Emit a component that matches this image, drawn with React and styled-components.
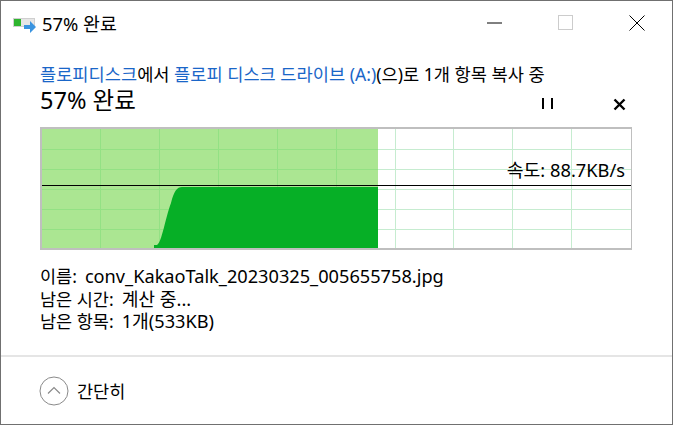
import React from 'react';
import styled, {createGlobalStyle} from 'styled-components';

const GlobalStyle = createGlobalStyle`
	html, body {
		margin: 0;
		padding: 0;
		background: #fff;
	}
	body {
		font-family: "Noto Sans", "Noto Sans CJK KR", sans-serif;
		color: #000;
	}
`;

const Window = styled.div`
	box-sizing: border-box;
	width: 673px;
	height: 425px;
	border: 1px solid #707070;
	background: #fff;
	display: flex;
	flex-direction: column;
`;

const TitleBar = styled.div`
	display: flex;
	align-items: center;
	height: 44px;
	padding-left: 12px;
	font-size: 18.4px;
	flex: none;
`;

const TitleText = styled.span`
	margin-left: 5px;
	flex: 1;
`;

const WinButton = styled.div`
	width: 71px;
	height: 44px;
	display: flex;
	align-items: center;
	justify-content: center;
`;

const Body = styled.div`
	flex: 1;
	padding: 17px 17px 0 39px;
`;

const CopyLine = styled.div`
	font-size: 17.6px;
	line-height: 24px;
	white-space: nowrap;
`;

const Place = styled.span`
	color: #1a66c8;
`;

const HeadRow = styled.div`
	display: flex;
	align-items: center;
	height: 26px;
	margin-bottom: 15px;
`;

const Heading = styled.div`
	flex: 1;
	font-size: 23.5px;
`;

const HeadButton = styled.div`
	width: 72px;
	padding-top: 10px;
	display: flex;
	justify-content: center;
`;

const Graph = styled.div`
	position: relative;
	width: 592px;
	height: 123px;
	box-sizing: border-box;
	border: 2px solid #bfbfbf;
	border-right-width: 1px;
	margin-bottom: 15px;
	svg {
		display: block;
	}
`;

const Speed = styled.div`
	position: absolute;
	right: 6px;
	top: 29px;
	font-size: 18.3px;
	line-height: 24px;
`;

const InfoRow = styled.div`
	font-size: 17.5px;
	line-height: 22.5px;
	display: flex;
	gap: 8px;
`;

const InfoValue = styled.span`
	font-size: 18.2px;
`;

const Footer = styled.div`
	flex: none;
	height: 67px;
	border-top: 2px solid #e5e5e5;
	display: flex;
	align-items: center;
	padding-left: 38px;
	gap: 8px;
	font-size: 17.5px;
`;

const gridX = [58, 117, 176, 235, 294, 353, 411, 470, 529];
const gridY = [20, 40, 60, 80, 100];
const FILL = 336;

const App = () => (
	<>
		<GlobalStyle />
		<Window>
			<TitleBar>
				<svg width="24" height="20" viewBox="0 0 24 20">
					<rect x="0.5" y="5.500" width="21" height="8" fill="#e6e6e6" stroke="#cfcfcf" />
					<rect x="1" y="6" width="7" height="7" fill="#2fb52f" />
					<path d="M11 12h6V8l6 6-6 6v-4h-6z" fill="#3a94e0" />
				</svg>
				<TitleText>57% 완료</TitleText>
				<WinButton>
					<svg width="16" height="16" viewBox="0 0 16 16">
						<path d="M0 8h15" stroke="#000" />
					</svg>
				</WinButton>
				<WinButton>
					<svg width="16" height="16" viewBox="0 0 16 16">
						<rect x="0.5" y="0.5" width="14" height="14" fill="none" stroke="#ccc" />
					</svg>
				</WinButton>
				<WinButton>
					<svg width="16" height="16" viewBox="0 0 16 16">
						<path d="M0.500 0.500l15 15M15.500 0.500l-15 15" stroke="#000" />
					</svg>
				</WinButton>
			</TitleBar>
			<Body>
				<CopyLine>
					<Place>플로피디스크</Place>에서 <Place>플로피 디스크 드라이브 (A:)</Place>(으)로 1개 항목 복사 중
				</CopyLine>
				<HeadRow>
					<Heading>57% 완료</Heading>
					<HeadButton>
						<svg width="12" height="12" viewBox="0 0 12 12">
							<path d="M2 0v11M11 0v11" stroke="#000" strokeWidth="2" />
						</svg>
					</HeadButton>
					<HeadButton>
						<svg width="13" height="13" viewBox="0 0 13 13">
							<path d="M1.500 1.500l10 10M11.500 1.500l-10 10" stroke="#000" strokeWidth="2.400" />
						</svg>
					</HeadButton>
				</HeadRow>
				<Graph>
					<svg width="589" height="119" viewBox="0 0 589 119">
						<rect x="0" y="0" width="589" height="119" fill="#fff" />
						{gridX.map(x => (
							<rect key={x} x={x} y="0" width="1" height="119" fill="#c6ecd0" />
						))}
						{gridY.map(y => (
							<rect key={y} x="0" y={y} width="589" height="1" fill="#c6ecd0" />
						))}
						<rect x="0" y="0" width={FILL} height="119" fill="#abe692" />
						{gridX.filter(x => x < FILL).map(x => (
							<rect key={x} x={x} y="0" width="1" height="119" fill="#93e184" />
						))}
						{gridY.map(y => (
							<rect key={y} x="0" y={y} width={FILL} height="1" fill="#93e184" />
						))}
						<path
							d={`M112 119V116H115C120 113 123 90 129 74C132 62 135 58 140 58H${FILL}V119Z`}
							fill="#06af26"
						/>
						<rect x="0" y="56" width="589" height="1" fill="#000" />
					</svg>
					<Speed>속도: 88.7KB/s</Speed>
				</Graph>
				<InfoRow>
					<span>이름:</span>
					<InfoValue>conv_KakaoTalk_20230325_005655758.jpg</InfoValue>
				</InfoRow>
				<InfoRow>
					<span>남은 시간:</span>
					<InfoValue>계산 중...</InfoValue>
				</InfoRow>
				<InfoRow>
					<span>남은 항목:</span>
					<InfoValue>1개(533KB)</InfoValue>
				</InfoRow>
			</Body>
			<Footer>
				<svg width="30" height="30" viewBox="0 0 30 30">
					<circle cx="15" cy="15" r="14" fill="none" stroke="#8a8a8a" />
					<path d="M9 17.500l6-6 6 6" fill="none" stroke="#8a8a8a" strokeWidth="1.200" />
				</svg>
				<span>간단히</span>
			</Footer>
		</Window>
	</>
);

export default App;
